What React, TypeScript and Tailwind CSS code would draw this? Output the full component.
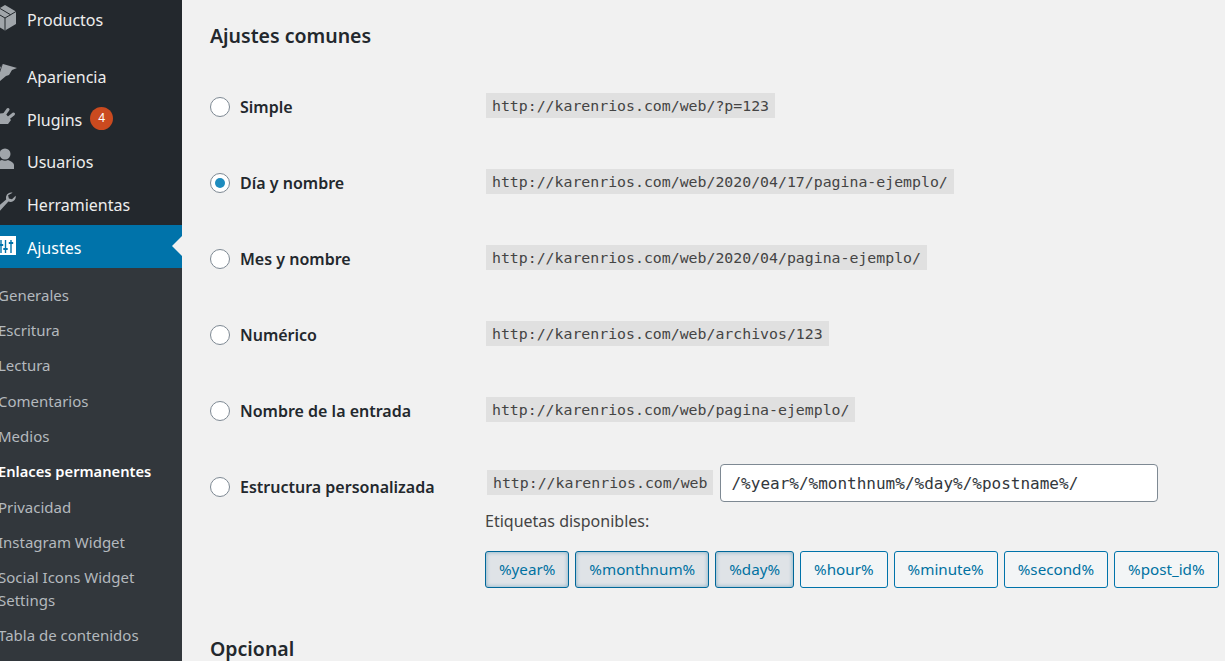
import React from 'react';

const sans = 'font-["Noto_Sans","Open_Sans",sans-serif]';

const Icon = ({ children, className = 'fill-[#a0a5aa]' }: { children: React.ReactNode; className?: string }) => (
  <svg viewBox="0 0 24 24" className={`w-[24px] h-[24px] -ml-[6px] mr-[9px] shrink-0 overflow-visible ${className}`}>
    {children}
  </svg>
);

const IconBox = () => (
  <Icon>
    <path d="M11 -3l11 6.500V16l-11 6.500L0 16V3.500z" />
    <path d="M0 3.500L11 10l11-6.500M5.500 .2l11 6.500M11 10v12" fill="none" stroke="#23282d" strokeWidth="1" />
  </Icon>
);

const IconBrush = () => (
  <Icon>
    <path d="M9 1l14 4-5 2-3 5-3 1-6 5H2V9z" />
    <path d="M8 2l-3 9" fill="none" stroke="#23282d" strokeWidth="0.8" />
  </Icon>
);

const IconPlug = () => (
  <Icon>
    <path d="M2 8l9-1 6 7-3 4H2z" />
    <path d="M10 9l4-5.500M14.500 12l5-4" fill="none" stroke="#a0a5aa" strokeWidth="3" strokeLinecap="round" />
  </Icon>
);

const IconUser = () => (
  <Icon>
    <circle cx="11" cy="5" r="5.500" />
    <path d="M2 20v-4c0-2 3-4 6-5 1.500 1 4.500 1 6 0 3 1 6 3 6 5v4z" />
  </Icon>
);

const IconWrench = () => (
  <Icon>
    <path d="M18.600 1.800c-2.600-.7-5.500.7-6.400 3.400-.3 1.100-.3 2.300 0 3.200L.6 18.600c-1 1-1 2.400 0 3.400s2.400 1 3.400 0l10.400-11.400c2.800 1.100 5.900-.2 7-3 .3-1 .5-1.900.2-2.900l-3.600 3.500-3.100-.8-.8-3.100z" />
  </Icon>
);

const IconSliders = () => (
  <Icon className="fill-white">
    <path fillRule="evenodd" d="M-1 2h23v19H-1zM6.300 6v4H4.800v2h1.500v7h1.400v-7h1.500v-2H7.700V6zM10.800 6v8H9.300v2h1.500v3h1.400v-3h1.500v-2h-1.500V6zM16.300 6v2h-1.500v2h1.500v9h1.400v-9h1.500V8h-1.500V6z" />
  </Icon>
);

const topItems = [
  { label: 'Apariencia', icon: <IconBrush /> },
  { label: 'Plugins', icon: <IconPlug />, badge: '4' },
  { label: 'Usuarios', icon: <IconUser /> },
  { label: 'Herramientas', icon: <IconWrench /> },
];

const subItems = ['Generales', 'Escritura', 'Lectura', 'Comentarios', 'Medios', 'Enlaces permanentes', 'Privacidad', 'Instagram Widget', 'Social Icons Widget Settings', 'Tabla de contenidos'];

const Sidebar = () => (
  <aside className={`w-[182px] shrink-0 h-full bg-[#23282d] text-[16px] text-[#eeeeee] flex flex-col ${sans}`}>
    <div className="h-[43px] -mt-[2px] flex items-center">
      <IconBox />
      <span>Productos</span>
    </div>
    <div className="h-[13px] shrink-0" />
    {topItems.map((item) => (
      <div key={item.label} className="h-[42.7px] shrink-0 flex items-center">
        {item.icon}
        <span className="pt-[3px]">{item.label}</span>
        {item.badge && (
          <span className="ml-[8px] w-[23px] h-[23px] rounded-full bg-[#ca4a1f] text-white text-[12px] flex items-center justify-center">{item.badge}</span>
        )}
      </div>
    ))}
    <div className="relative h-[43px] shrink-0 bg-[#0073aa] text-white flex items-center">
      <IconSliders />
      <span className="pt-[3px]">Ajustes</span>
      <div className="absolute right-0 top-[11px] w-0 h-0 border-y-[10px] border-y-transparent border-r-[10px] border-r-[#f1f1f1]" />
    </div>
    <ul className="flex-1 bg-[#32373c] text-[15px] leading-[23px] text-[#b4b9be] pt-[16px] pl-0 -ml-[2px]">
      {subItems.map((s) => (
        <li key={s} className={`pb-[12.3px] pr-[10px] ${s === 'Enlaces permanentes' ? 'font-semibold text-[14.700px] text-white' : ''}`}>{s}</li>
      ))}
    </ul>
  </aside>
);

const options = [
  { label: 'Simple', url: 'http://karenrios.com/web/?p=123' },
  { label: 'Día y nombre', url: 'http://karenrios.com/web/2020/04/17/pagina-ejemplo/', checked: true },
  { label: 'Mes y nombre', url: 'http://karenrios.com/web/2020/04/pagina-ejemplo/' },
  { label: 'Numérico', url: 'http://karenrios.com/web/archivos/123' },
  { label: 'Nombre de la entrada', url: 'http://karenrios.com/web/pagina-ejemplo/' },
];

const tags = [
  { label: '%year%', active: true },
  { label: '%monthnum%', active: true },
  { label: '%day%', active: true },
  { label: '%hour%' },
  { label: '%minute%' },
  { label: '%second%' },
  { label: '%post_id%' },
];

const Radio = ({ checked }: { checked?: boolean }) => (
  <span className="w-[20px] h-[20px] shrink-0 rounded-full bg-white border border-[#7e8993] flex items-center justify-center">
    {checked && <span className="w-[10px] h-[10px] rounded-full bg-[#1e8cbe]" />}
  </span>
);

const Code = ({ children }: { children: React.ReactNode }) => (
  <code className='bg-[#e0e0e0] text-[#444444] px-[6px] h-[25px] pt-[2px] mb-[2px] flex items-center text-[14.850px] font-["DejaVu_Sans_Mono",monospace] whitespace-nowrap'>
    {children}
  </code>
);

export default function App() {
  return (
    <div className="h-[661px] w-[1225px] overflow-hidden flex bg-[#f1f1f1]">
      <Sidebar />
      <main className={`flex-1 pl-[28px] text-[#23282d] ${sans}`}>
        <h2 className="h-[68px] pt-[21px] text-[19.500px] leading-[30px] font-semibold">Ajustes comunes</h2>
        {options.map((o) => (
          <div key={o.label} className="h-[76px] flex items-center">
            <div className="w-[276px] shrink-0 flex items-center gap-[10px] pt-[2px]">
              <Radio checked={o.checked} />
              <span className="text-[16px] font-semibold">{o.label}</span>
            </div>
            <Code>{o.url}</Code>
          </div>
        ))}
        <div className="flex pt-[16px]">
          <div className="w-[275px] shrink-0 flex items-center gap-[10px] h-[46px] self-start">
            <Radio />
            <span className="text-[16px] font-semibold">Estructura personalizada</span>
          </div>
          <div className="flex-1">
            <div className="flex items-center gap-[7px] h-[38px] pl-[2px]">
              <Code>http://karenrios.com/web</Code>
              <input
                readOnly
                value="/%year%/%monthnum%/%day%/%postname%/"
                className='w-[438px] h-[38px] rounded-[4px] border border-[#7e8993] bg-white px-[10px] text-[16px] text-[#32373c] font-["DejaVu_Sans_Mono",monospace] outline-none'
              />
            </div>
            <p className="mt-[6px] text-[16px] leading-[27px] text-[#444444]">Etiquetas disponibles:</p>
            <div className="mt-[16px] flex gap-[6px]">
              {tags.map((t) => (
                <button
                  key={t.label}
                  className={`h-[37px] px-[13px] rounded-[3px] border text-[15.200px] text-[#0071a1] whitespace-nowrap ${t.active ? 'bg-[#dfe3e7] border-[#006799] shadow-[inset_0_0_4px_rgba(0,103,153,0.45)]' : 'bg-[#f3f5f6] border-[#0073aa]'}`}
                >
                  {t.label}
                </button>
              ))}
            </div>
          </div>
        </div>
        <h2 className="mt-[46px] text-[19.500px] leading-[30px] font-semibold">Opcional</h2>
      </main>
    </div>
  );
}
